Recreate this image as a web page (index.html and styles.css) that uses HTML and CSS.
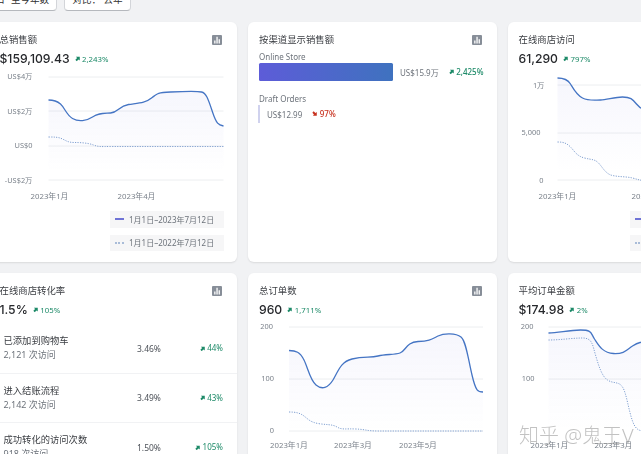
FILE: index.html
```html
<!DOCTYPE html>
<html lang="zh">
<head>
<meta charset="utf-8">
<title>概览</title>
<link rel="stylesheet" href="styles.css">
</head>
<body>
<svg class="defs" width="0" height="0" aria-hidden="true">
  <defs>
    <linearGradient id="fade" x1="0" y1="0" x2="0" y2="1">
      <stop offset="0" stop-color="#5c5fd6" stop-opacity=".055"/>
      <stop offset="1" stop-color="#5c5fd6" stop-opacity="0"/>
    </linearGradient>
    <symbol id="bars" viewBox="0 0 10 10">
      <rect width="10" height="10" rx="1" fill="#878e98"/>
      <path d="M2.2 5.5h1.3v3H2.2zM4.4 1.8h1.3v6.7H4.4zM6.6 4.2h1.3v4.3H6.6z" fill="#fff"/>
    </symbol>
    <symbol id="up" viewBox="0 0 6 6">
      <path d="M1 .8h4.200V5L3.900 3.900 1.800 5.600.4 4.200l1.900-2z" fill="currentColor"/>
    </symbol>
  </defs>
</svg>
<main class="page">
  <div class="toolbar">
    <button class="btn btn-date"><span class="cal">日</span>至今年数</button>
    <button class="btn btn-cmp">对比： 去年</button>
  </div>
  <div class="grid">

    <section class="card">
      <div class="head">
        <div class="title-row"><h2>总销售额</h2><svg class="ico"><use href="#bars"/></svg></div>
        <div class="value-row"><strong>$159,109.43</strong><span class="delta up"><svg class="arr"><use href="#up"/></svg>2,243%</span></div>
      </div>
      <svg class="chart c-top" viewBox="-11.5 70 248.5 135">
        <g class="grid-lines">
          <path d="M48 77H223M48 111H223M48 146H223M48 180H223"/>
        </g>
        <g class="axis end">
          <text x="32" y="79">US$4万</text><text x="32" y="114">US$2万</text><text x="32" y="148">US$0</text><text x="32" y="182.500">-US$2万</text>
        </g>
        <g class="axis xl">
          <text x="30" y="199">2023年1月</text><text x="117" y="199">2023年4月</text>
        </g>
        <path class="area" d="M48 100C53 100 56 100.5 60 104S66 115 72 118.5S86 121 92 117S102 113.500 110 113S118 106 128 104.500S145 103 151 98S158 92.500 170 92S196 91 201 92S208 100 212 112S218 125 223 126V172H48Z"/>
        <path class="line" d="M48 100C53 100 56 100.5 60 104S66 115 72 118.5S86 121 92 117S102 113.500 110 113S118 106 128 104.500S145 103 151 98S158 92.500 170 92S196 91 201 92S208 100 212 112S218 125 223 126"/>
        <path class="dots" d="M48 137C54 137 58 137 62 139S68 142.500 74 142.500S88 143 93 145S100 146.500 110 146.500H223"/>
      </svg>
      <div class="legend">
        <div class="chip"><i class="swatch solid"></i>1月1日–2023年7月12日</div>
        <div class="chip"><i class="swatch dotted"></i>1月1日–2022年7月12日</div>
      </div>
    </section>

    <section class="card">
      <div class="head head-short">
        <div class="title-row"><h2>按渠道显示销售额</h2><svg class="ico"><use href="#bars"/></svg></div>
      </div>
      <div class="channels">
        <div class="ch-label">Online Store</div>
        <div class="ch-row">
          <div class="ch-bar"></div>
          <span class="ch-amt">US$15.9万</span>
          <span class="delta up wide"><svg class="arr"><use href="#up"/></svg>2,425%</span>
        </div>
        <div class="ch-label next">Draft Orders</div>
        <div class="ch-row">
          <div class="ch-sliver"></div>
          <span class="ch-amt">US$12.99</span>
          <span class="delta down wide"><svg class="arr flip"><use href="#up"/></svg>97%</span>
        </div>
      </div>
    </section>

    <section class="card">
      <div class="head">
        <div class="title-row"><h2>在线商店访问</h2></div>
        <div class="value-row"><strong>61,290</strong><span class="delta up"><svg class="arr"><use href="#up"/></svg>797%</span></div>
      </div>
      <svg class="chart c-top" viewBox="507.500 70 248.500 135">
        <g class="grid-lines"><path d="M557 85H760M557 133H760M557 180H760"/></g>
        <g class="axis end">
          <text x="544" y="88">1万</text><text x="540" y="135">5,000</text><text x="543" y="183">0</text>
        </g>
        <g class="axis xl"><text x="538" y="199">2023年1月</text><text x="631" y="199">2023年4月</text></g>
        <path class="area" d="M557 78C563 78 567 79 570 84S576 95 582 98S594 100 600 100S614 97 622 97S632 99 636 104S644 111 656 112V172H557Z"/>
        <path class="line" d="M557 78C563 78 567 79 570 84S576 95 582 98S594 100 600 100S614 97 622 97S632 99 636 104S644 111 656 112"/>
        <path class="dots" d="M557 142C563 142 566 143 570 147S576 156 584 158S594 159 598 163S605 174 612 175.500S626 176.500 632 178S640 181 650 181"/>
      </svg>
      <div class="legend legend-left">
        <div class="chip"><i class="swatch solid"></i>1月1日–2023年7月12日</div>
        <div class="chip"><i class="swatch dotted"></i>1月1日–2022年7月12日</div>
      </div>
    </section>

    <section class="card">
      <div class="head">
        <div class="title-row"><h2>在线商店转化率</h2><svg class="ico"><use href="#bars"/></svg></div>
        <div class="value-row"><strong>1.5%</strong><span class="delta up"><svg class="arr"><use href="#up"/></svg>105%</span></div>
      </div>
      <div class="funnel">
        <div class="f-row">
          <div><div class="f-name">已添加到购物车</div><div class="f-sub">2,121 次访问</div></div>
          <div class="f-rate">3.46%</div>
          <div class="delta up f-delta"><svg class="arr"><use href="#up"/></svg>44%</div>
        </div>
        <div class="f-row">
          <div><div class="f-name">进入结账流程</div><div class="f-sub">2,142 次访问</div></div>
          <div class="f-rate">3.49%</div>
          <div class="delta up f-delta"><svg class="arr"><use href="#up"/></svg>43%</div>
        </div>
        <div class="f-row">
          <div><div class="f-name">成功转化的访问次数</div><div class="f-sub">918 次访问</div></div>
          <div class="f-rate">1.50%</div>
          <div class="delta up f-delta"><svg class="arr"><use href="#up"/></svg>105%</div>
        </div>
      </div>
    </section>

    <section class="card">
      <div class="head">
        <div class="title-row"><h2>总订单数</h2><svg class="ico"><use href="#bars"/></svg></div>
        <div class="value-row"><strong>960</strong><span class="delta up"><svg class="arr"><use href="#up"/></svg>1,711%</span></div>
      </div>
      <svg class="chart" viewBox="248 321 248.500 133">
        <g class="grid-lines"><path d="M289 327H483M289 379H483M289 431H483"/></g>
        <g class="axis end"><text x="273" y="329">200</text><text x="274" y="381">100</text><text x="274" y="433">0</text></g>
        <g class="axis xl"><text x="270" y="448">2023年1月</text><text x="334" y="448">2023年3月</text><text x="399" y="448">2023年5月</text></g>
        <path class="area" d="M289 350.500C296 350.500 300 352 304 360S310 380 316 385S328 388 333 380S340 362 352 359S370 358 378 356S394 355 400 353S406 342 418 341.500S432 339 438 336S456 333 461 337S468 358 472 375S478 392 483 392V431H289Z"/>
        <path class="line" d="M289 350.500C296 350.500 300 352 304 360S310 380 316 385S328 388 333 380S340 362 352 359S370 358 378 356S394 355 400 353S406 342 418 341.500S432 339 438 336S456 333 461 337S468 358 472 375S478 392 483 392"/>
        <path class="dots" d="M289 412C296 412 300 413 304 416S310 422 318 423.500S332 424 337 427S345 428.500 356 429S366 431 378 431H483"/>
      </svg>
    </section>

    <section class="card">
      <div class="head">
        <div class="title-row"><h2>平均订单金额</h2></div>
        <div class="value-row"><strong>$174.98</strong><span class="delta up"><svg class="arr"><use href="#up"/></svg>2%</span></div>
      </div>
      <svg class="chart" viewBox="507.500 321 248.500 133">
        <g class="grid-lines"><path d="M548 327H760M548 379H760"/></g>
        <g class="axis end"><text x="533" y="329">200</text><text x="534" y="381">100</text></g>
        <g class="axis xl"><text x="530" y="448">2023年1月</text><text x="594" y="448">2023年3月</text></g>
        <path class="area" d="M548 333C558 333 568 330 580 330S590 333 594 339S602 353 613 353.500S626 350 632 346S640 342 650 342V431H548Z"/>
        <path class="line" d="M548 333C558 333 568 330 580 330S590 333 594 339S602 353 613 353.500S626 350 632 346S640 342 650 342"/>
        <path class="dots" d="M548 340C560 340 572 338 582 338S592 345 595 355S601 376 607 380S618 381 622 387S628 410 632 421S640 431 650 431"/>
      </svg>
    </section>

  </div>
</main>
<div class="watermark">知乎 @鬼王V</div>
</body>
</html>
```

FILE: styles.css
```css
html, body {
  margin: 0;
  height: 454px;
  overflow: hidden;
  background: #f1f2f4;
}
body {
  position: relative;
  font-family: "Noto Sans", "Noto Sans CJK SC", sans-serif;
  color: #303030;
}
.defs { position: absolute; }
.page {
  margin-left: -11.5px;
  width: 770px;
  filter: blur(.3px);
}
.toolbar {
  display: flex;
  gap: 7px;
  height: 22px;
  margin-top: -11px;
  padding-left: 4px;
}
.btn {
  height: 22px;
  padding: 0;
  box-sizing: border-box;
  border: 1px solid #d3d5d9;
  border-bottom-color: #b5b8bd;
  border-radius: 4px;
  background: #fff;
  font: 400 9.5px/20px "Noto Sans", "Noto Sans CJK SC", sans-serif;
  color: #303030;
  text-align: left;
}
.btn-date { width: 64px; padding-left: 2px; }
.cal { margin-right: 6px; }
.btn-cmp { width: 67px; padding-left: 8px; }
.grid {
  display: grid;
  grid-template-columns: repeat(3, 248.5px);
  grid-template-rows: 240px 240px;
  column-gap: 11px;
  row-gap: 11px;
  margin-top: 11px;
}
.card {
  background: #fff;
  border-radius: 6px;
  box-shadow: 0 1px 2px rgba(0, 0, 0, .1);
  overflow: hidden;
}
.head {
  box-sizing: border-box;
  height: 48px;
  padding: 11px 15px 0 11px;
}
.head-short { height: 29px; }
.title-row {
  display: flex;
  justify-content: space-between;
  align-items: center;
  height: 14px;
}
h2 {
  margin: 0;
  font-size: 9.4px;
  line-height: 14px;
  font-weight: 400;
  color: #3a3d42;
}
.ico { width: 10px; height: 10px; }
.value-row {
  display: flex;
  align-items: center;
  gap: 5px;
  height: 18px;
  margin-top: 3px;
}
strong {
  font-family: Inter, "Noto Sans CJK SC", sans-serif;
  font-size: 12.2px;
  line-height: 18px;
  font-weight: 500;
  color: #26282c;
}
.delta {
  display: inline-flex;
  align-items: center;
  gap: 2px;
  font-size: 7.8px;
  line-height: 12px;
}
.up { color: #1d8a68; }
.down { color: #c8321f; }
.arr { width: 5.5px; height: 5.5px; }
.flip { transform: rotate(90deg); }
.wide { font-size: 8px; font-weight: 500; }
.chart {
  display: block;
  width: 248.5px;
}
.c-top { height: 135px; }
.chart:not(.c-top) { height: 133px; }
.grid-lines path { fill: none; stroke: #eceef0; stroke-width: 1; }
.axis text {
  font-size: 7.4px;
  fill: #7b828b;
  font-family: "Noto Sans", "Noto Sans CJK SC", sans-serif;
}
.axis.xl text { font-size: 7.8px; }
.axis.end text { text-anchor: end; }
.area { fill: url(#fade); stroke: none; }
.line { fill: none; stroke: #4575c4; stroke-width: 1.3; }
.dots { fill: none; stroke: #7f9fd0; stroke-width: 1; stroke-dasharray: 1.2 1.3; }
.legend {
  display: flex;
  flex-direction: column;
  align-items: flex-end;
  gap: 7px;
  margin-top: 6px;
  padding-right: 13px;
}
.legend-left { align-items: flex-start; padding-left: 122px; padding-right: 0; }
.chip {
  display: flex;
  align-items: center;
  gap: 5px;
  box-sizing: border-box;
  width: 114px;
  height: 16.5px;
  padding-left: 5px;
  background: #f6f6f7;
  font-size: 8px;
  color: #6d737b;
  white-space: nowrap;
}
.swatch { width: 9px; flex: none; }
.solid { border-top: 2px solid #6f73d6; }
.dotted { border-top: 2px dotted #a9bcd8; }
.channels { padding: 0 11px; font-size: 8px; color: #6d737b; }
.ch-label { height: 12px; line-height: 12px; }
.ch-label.next { margin-top: 12px; }
.ch-row { display: flex; align-items: center; height: 18px; white-space: nowrap; }
.ch-bar {
  width: 134px;
  height: 18px;
  border-radius: 1.5px;
  background: linear-gradient(90deg, #5d5cd8, #3f72bf);
}
.ch-amt { margin-left: 7px; }
.ch-sliver { width: 2px; height: 18px; margin-left: -1px; background: #d0d2ee; }
.ch-row .wide { margin-left: 10px; }
.funnel { margin-top: 3px; }
.f-row {
  display: grid;
  grid-template-columns: 133.500px 1fr auto;
  align-items: center;
  box-sizing: border-box;
  height: 49.5px;
  padding: 0 14px 0 15px;
  border-bottom: 1.5px solid #f1f2f4;
}
.f-name { font-size: 9.3px; line-height: 14px; color: #3a3d42; }
.f-sub { font-size: 9px; line-height: 14px; color: #6d737b; }
.f-rate { font-size: 8.5px; color: #4d5259; }
.f-delta { font-size: 8px; }
.watermark {
  position: absolute;
  left: 519px;
  top: 422px;
  font-size: 20px;
  font-weight: 300;
  line-height: 28px;
  color: rgba(120, 120, 120, .45);
  white-space: nowrap;
}
```
